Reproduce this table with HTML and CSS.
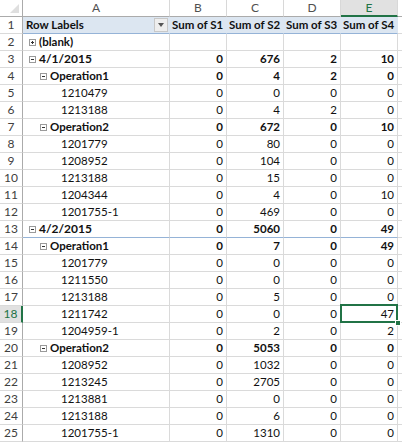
FILE: index.html
```html
<!DOCTYPE html>
<html>
<head>
<meta charset="utf-8">
<link rel="stylesheet" href="styles.css">
</head>
<body>
<table class="sheet">
  <colgroup>
    <col class="c-rh"><col class="c-a"><col class="c-n"><col class="c-n"><col class="c-n"><col class="c-n"><col class="c-f">
  </colgroup>
  <thead>
    <tr class="colhead">
      <th class="corner"><span class="tri"></span></th>
      <th>A</th><th>B</th><th>C</th><th>D</th><th class="selcol">E</th><th class="f"></th>
    </tr>
  </thead>
  <tbody>
    <tr class="pv-head">
      <th class="rh">1</th>
      <td class="lab">Row Labels<span class="dd"><span class="dd-tri"></span></span></td>
      <td>Sum of S1</td><td>Sum of S2</td><td>Sum of S3</td><td>Sum of S4</td><td class="f"></td>
    </tr>
    <tr class="b">
      <th class="rh">2</th>
      <td class="l1"><span class="box plus"></span>(blank)</td>
      <td></td><td></td><td></td><td></td><td class="f"></td>
    </tr>
    <tr class="b">
      <th class="rh">3</th>
      <td class="l1 d"><span class="box"></span>4/1/2015</td>
      <td class="n">0</td><td class="n">676</td><td class="n">2</td><td class="n">10</td><td class="f"></td>
    </tr>
    <tr class="b">
      <th class="rh">4</th>
      <td class="l2"><span class="box"></span>Operation1</td>
      <td class="n">0</td><td class="n">4</td><td class="n">2</td><td class="n">0</td><td class="f"></td>
    </tr>
    <tr>
      <th class="rh">5</th>
      <td class="l3">1210479</td>
      <td class="n">0</td><td class="n">0</td><td class="n">0</td><td class="n">0</td><td class="f"></td>
    </tr>
    <tr>
      <th class="rh">6</th>
      <td class="l3">1213188</td>
      <td class="n">0</td><td class="n">4</td><td class="n">2</td><td class="n">0</td><td class="f"></td>
    </tr>
    <tr class="b">
      <th class="rh">7</th>
      <td class="l2"><span class="box"></span>Operation2</td>
      <td class="n">0</td><td class="n">672</td><td class="n">0</td><td class="n">10</td><td class="f"></td>
    </tr>
    <tr>
      <th class="rh">8</th>
      <td class="l3">1201779</td>
      <td class="n">0</td><td class="n">80</td><td class="n">0</td><td class="n">0</td><td class="f"></td>
    </tr>
    <tr>
      <th class="rh">9</th>
      <td class="l3">1208952</td>
      <td class="n">0</td><td class="n">104</td><td class="n">0</td><td class="n">0</td><td class="f"></td>
    </tr>
    <tr>
      <th class="rh">10</th>
      <td class="l3">1213188</td>
      <td class="n">0</td><td class="n">15</td><td class="n">0</td><td class="n">0</td><td class="f"></td>
    </tr>
    <tr>
      <th class="rh">11</th>
      <td class="l3">1204344</td>
      <td class="n">0</td><td class="n">4</td><td class="n">0</td><td class="n">10</td><td class="f"></td>
    </tr>
    <tr>
      <th class="rh">12</th>
      <td class="l3">1201755-1</td>
      <td class="n">0</td><td class="n">469</td><td class="n">0</td><td class="n">0</td><td class="f"></td>
    </tr>
    <tr class="b sep">
      <th class="rh">13</th>
      <td class="l1 d"><span class="box"></span>4/2/2015</td>
      <td class="n">0</td><td class="n">5060</td><td class="n">0</td><td class="n">49</td><td class="f"></td>
    </tr>
    <tr class="b">
      <th class="rh">14</th>
      <td class="l2"><span class="box"></span>Operation1</td>
      <td class="n">0</td><td class="n">7</td><td class="n">0</td><td class="n">49</td><td class="f"></td>
    </tr>
    <tr>
      <th class="rh">15</th>
      <td class="l3">1201779</td>
      <td class="n">0</td><td class="n">0</td><td class="n">0</td><td class="n">0</td><td class="f"></td>
    </tr>
    <tr>
      <th class="rh">16</th>
      <td class="l3">1211550</td>
      <td class="n">0</td><td class="n">0</td><td class="n">0</td><td class="n">0</td><td class="f"></td>
    </tr>
    <tr>
      <th class="rh">17</th>
      <td class="l3">1213188</td>
      <td class="n">0</td><td class="n">5</td><td class="n">0</td><td class="n">0</td><td class="f"></td>
    </tr>
    <tr>
      <th class="rh selrow">18</th>
      <td class="l3">1211742</td>
      <td class="n">0</td><td class="n">0</td><td class="n">0</td><td class="n active">47<span class="handle"></span></td><td class="f"></td>
    </tr>
    <tr>
      <th class="rh">19</th>
      <td class="l3">1204959-1</td>
      <td class="n">0</td><td class="n">2</td><td class="n">0</td><td class="n">2</td><td class="f"></td>
    </tr>
    <tr class="b">
      <th class="rh">20</th>
      <td class="l2"><span class="box"></span>Operation2</td>
      <td class="n">0</td><td class="n">5053</td><td class="n">0</td><td class="n">0</td><td class="f"></td>
    </tr>
    <tr>
      <th class="rh">21</th>
      <td class="l3">1208952</td>
      <td class="n">0</td><td class="n">1032</td><td class="n">0</td><td class="n">0</td><td class="f"></td>
    </tr>
    <tr>
      <th class="rh">22</th>
      <td class="l3">1213245</td>
      <td class="n">0</td><td class="n">2705</td><td class="n">0</td><td class="n">0</td><td class="f"></td>
    </tr>
    <tr>
      <th class="rh">23</th>
      <td class="l3">1213881</td>
      <td class="n">0</td><td class="n">0</td><td class="n">0</td><td class="n">0</td><td class="f"></td>
    </tr>
    <tr>
      <th class="rh">24</th>
      <td class="l3">1213188</td>
      <td class="n">0</td><td class="n">6</td><td class="n">0</td><td class="n">0</td><td class="f"></td>
    </tr>
    <tr>
      <th class="rh">25</th>
      <td class="l3">1201755-1</td>
      <td class="n">0</td><td class="n">1310</td><td class="n">0</td><td class="n">0</td><td class="f"></td>
    </tr>
  </tbody>
</table>
</body>
</html>
```

FILE: styles.css
```css
* { box-sizing: border-box; }
html, body {
  margin: 0;
  padding: 0;
  background: #ffffff;
  overflow: hidden;
}
body {
  width: 402px;
  height: 442px;
}
.sheet {
  table-layout: fixed;
  border-collapse: separate;
  border-spacing: 0;
  width: 402px;
  font-family: "Lato", "Liberation Sans", sans-serif;
  font-size: 11.5px;
  color: #111;
}
.c-rh { width: 23px; }
.c-a { width: 147px; }
.c-n { width: 57px; }
.c-f { width: 4px; }

.sheet td, .sheet th {
  padding: 0 3px;
  height: 17px;
  line-height: 16px;
  border-right: 1px solid #dadada;
  border-bottom: 1px solid #dadada;
  white-space: nowrap;
  overflow: hidden;
  font-weight: normal;
}
.sheet td.f, .sheet th.f {
  padding: 0;
  border-right: none;
}

/* column header row */
.colhead th {
  height: 17px;
  background: #ffffff;
  color: #505050;
  text-align: center;
  border-right: 1px solid #d8d8d8;
  border-bottom: 1px solid #ababab;
  font-family: "Lato", "Liberation Sans", sans-serif;
  font-size: 12px;
}
.colhead th.corner {
  position: relative;
  border-right: 1px solid #ababab;
}
.tri {
  position: absolute;
  right: 3px;
  bottom: 3px;
  width: 0;
  height: 0;
  border-left: 9px solid transparent;
  border-bottom: 9px solid #dfdfdf;
}
.colhead th.selcol {
  background: #e1e1e1;
  color: #217346;
  border-bottom: 2px solid #217346;
  line-height: 15px;
}

/* row header */
th.rh {
  background: #ffffff;
  color: #404040;
  text-align: center;
  padding: 0;
  border-right: 1px solid #ababab;
  border-bottom: 1px solid #dadada;
  font-size: 12px;
}
.sheet tr.b th.rh { font-weight: normal; }
th.rh.selrow {
  background: #e1e1e1;
  color: #217346;
  border-right: 2px solid #217346;
}

/* pivot header row */
.pv-head td {
  background: #dce6f1;
  font-weight: bold;
  border-bottom: 1px solid #95b3d7;
  border-right: 1px solid #dce6f1;
  color: #111;
  padding: 0 2px;
}
.pv-head td.lab {
  position: relative;
  padding-left: 3px;
}
.pv-head td.f {
  background: #fff;
  border-bottom-color: #dadada;
}
.dd {
  position: absolute;
  right: 1px;
  top: 1px;
  width: 14px;
  height: 14px;
  background: #eeeeee;
  border: 1px solid #c8c8c8;
}
.dd-tri {
  position: absolute;
  left: 3px;
  top: 4px;
  border-left: 3.5px solid transparent;
  border-right: 3.5px solid transparent;
  border-top: 4px solid #555;
}

/* data rows */
td.n { text-align: right; }
tr.b td { font-weight: bold; }
tr.sep td { border-bottom: 1px solid #95b3d7; }
tr.sep td.f { border-bottom-color: #dadada; }

td.l1 { padding-left: 6px; }
td.l2 { padding-left: 17px; }
td.l3 { padding-left: 38px; }
td.d { font-size: 12px; }

.box {
  display: inline-block;
  position: relative;
  width: 7px;
  height: 7px;
  border: 1px solid #9a9a9a;
  background: #fff;
  margin-right: 3px;
  vertical-align: 0px;
}
.box::before {
  content: "";
  position: absolute;
  left: 1px;
  top: 2px;
  width: 3px;
  height: 1px;
  background: #333;
}
.box.plus::after {
  content: "";
  position: absolute;
  left: 2px;
  top: 1px;
  width: 1px;
  height: 3px;
  background: #333;
}

/* active cell */
td.active {
  position: relative;
  overflow: visible;
}
td.active::after {
  content: "";
  position: absolute;
  left: -1px;
  top: -2px;
  right: -1px;
  bottom: -1px;
  border: 2px solid #217346;
}
.handle {
  position: absolute;
  right: -4px;
  bottom: -4px;
  width: 6px;
  height: 6px;
  background: #217346;
  border: 1px solid #fff;
  z-index: 2;
}
```
